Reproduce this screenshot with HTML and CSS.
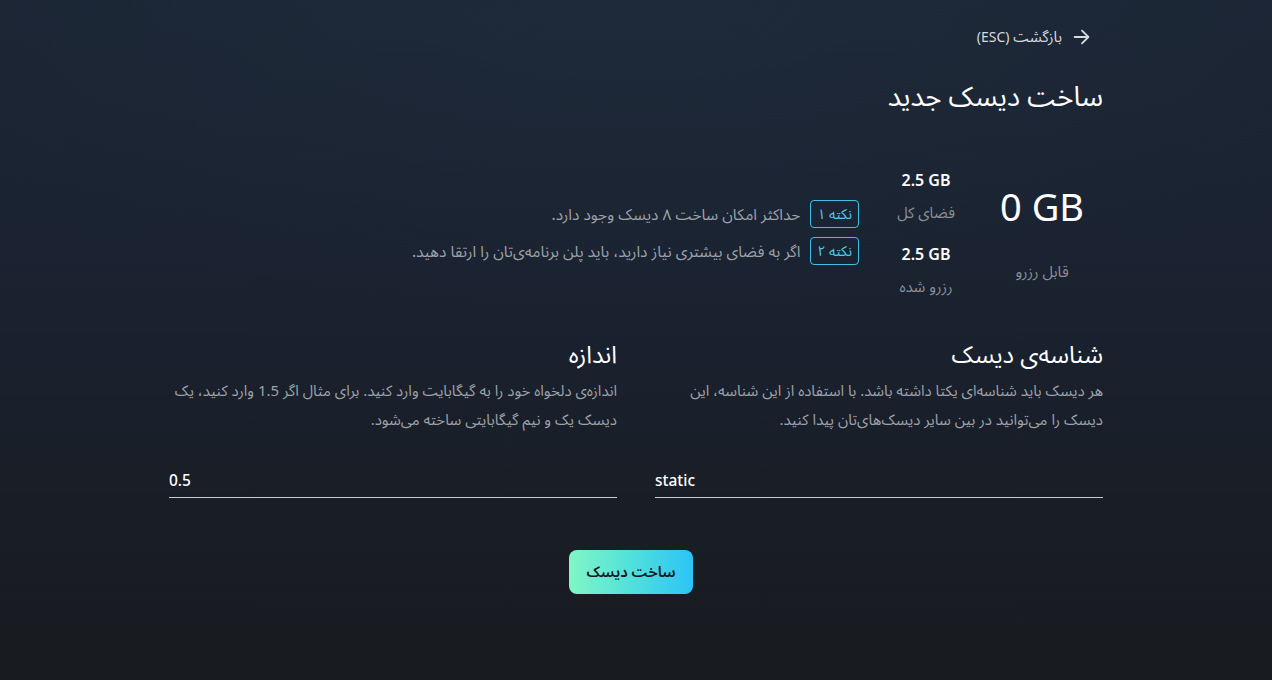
FILE: index.html
```html
<!DOCTYPE html>
<html lang="fa" dir="rtl">
<head>
<meta charset="utf-8">
<title>ساخت دیسک جدید</title>
<link rel="stylesheet" href="styles.css">
</head>
<body>
<main class="page">
  <div class="back-row">
    <a class="back" href="#">
      <svg class="back-icon" viewBox="0 0 24 24" width="22" height="22" aria-hidden="true">
        <path d="M4 12h15M12 5l7 7-7 7" fill="none" stroke="currentColor" stroke-width="2" stroke-linecap="round" stroke-linejoin="round"/>
      </svg>
      <span>بازگشت <span class="esc">(ESC)</span></span>
    </a>
  </div>

  <h1 class="title">ساخت دیسک جدید</h1>

  <section class="stats">
    <div class="stat-main">
      <div class="stat-big" dir="ltr">0 GB</div>
      <div class="stat-label">قابل رزرو</div>
    </div>
    <div class="stat-col">
      <div class="stat-item">
        <div class="stat-value" dir="ltr">2.5 GB</div>
        <div class="stat-label">فضای کل</div>
      </div>
      <div class="stat-item">
        <div class="stat-value" dir="ltr">2.5 GB</div>
        <div class="stat-label">رزرو شده</div>
      </div>
    </div>
    <div class="notes">
      <div class="note">
        <span class="badge">نکته ۱</span>
        <span class="note-text">حداکثر امکان ساخت ۸ دیسک وجود دارد.</span>
      </div>
      <div class="note">
        <span class="badge">نکته ۲</span>
        <span class="note-text">اگر به فضای بیشتری نیاز دارید، باید پلن برنامه‌ی‌تان را ارتقا دهید.</span>
      </div>
    </div>
  </section>

  <section class="form">
    <div class="field">
      <h2 class="field-title">شناسه‌ی دیسک</h2>
      <p class="field-desc">هر دیسک باید شناسه‌ای یکتا داشته باشد. با استفاده از این شناسه، این دیسک را می‌توانید در بین سایر دیسک‌های‌تان پیدا کنید.</p>
      <input class="field-input" type="text" value="static" dir="ltr">
    </div>
    <div class="field">
      <h2 class="field-title">اندازه</h2>
      <p class="field-desc">اندازه‌ی دلخواه خود را به گیگابایت وارد کنید. برای مثال اگر 1.5 وارد کنید، یک دیسک یک و نیم گیگابایتی ساخته می‌شود.</p>
      <input class="field-input" type="text" value="0.5" dir="ltr">
    </div>
  </section>

  <div class="actions">
    <button class="submit" type="button">ساخت دیسک</button>
  </div>
</main>
</body>
</html>
```

FILE: styles.css
```css
* { box-sizing: border-box; }

html, body {
  margin: 0;
  padding: 0;
}

body {
  min-height: 680px;
  font-family: "Noto Sans", "Noto Sans Arabic", "DejaVu Sans", sans-serif;
  color: #ffffff;
  background:
    radial-gradient(ellipse 70% 45% at 50% 0%, rgba(32, 45, 62, 0.55), rgba(32, 45, 62, 0) 100%),
    linear-gradient(180deg, #1b2534 0%, #1a2230 45%, #191d24 80%, #181b1f 100%);
}

.page {
  width: 934px;
  margin: 0 auto;
  padding-top: 25px;
}

.back-row {
  display: flex;
  justify-content: flex-start;
  padding-right: 10px;
}

.back {
  display: flex;
  align-items: center;
  gap: 9px;
  color: #d6d9de;
  text-decoration: none;
  font-size: 15px;
  line-height: 22px;
}

.esc {
  font-size: 14px;
}

.back-icon {
  color: #d6d9de;
}

.title {
  margin: 30px 0 0;
  font-size: 27.5px;
  font-weight: 400;
  line-height: 36px;
}

.stats {
  display: flex;
  align-items: flex-start;
  margin-top: 56px;
}

.stat-main {
  width: 122px;
  display: flex;
  flex-direction: column;
  align-items: center;
  padding-top: 13px;
}

.stat-big {
  font-size: 38px;
  line-height: 46px;
  font-weight: 400;
}

.stat-main .stat-label {
  margin-top: 32px;
}

.stat-col {
  width: 80px;
  margin-right: 15px;
  display: flex;
  flex-direction: column;
  gap: 22px;
}

.stat-item {
  display: flex;
  flex-direction: column;
  align-items: center;
  gap: 12px;
}

.stat-value {
  font-size: 16px;
  font-weight: 600;
  line-height: 20px;
}

.stat-label {
  font-size: 15px;
  line-height: 20px;
  color: #8b9098;
}

.notes {
  margin-right: 27px;
  margin-top: 30px;
  display: flex;
  flex-direction: column;
  gap: 9px;
}

.note {
  display: flex;
  align-items: center;
  gap: 10px;
  height: 28px;
}

.badge {
  border: 1px solid #3fbfea;
  border-radius: 4px;
  color: #52c8f0;
  font-size: 14px;
  line-height: 26px;
  padding: 0 6px;
}

.note-text {
  font-size: 15.5px;
  line-height: 28px;
  color: #9da2a9;
}

.form {
  display: grid;
  grid-template-columns: 1fr 1fr;
  gap: 38px;
  margin-top: 43px;
}

.field {
  display: flex;
  flex-direction: column;
}

.field-title {
  margin: 0;
  font-size: 24px;
  font-weight: 400;
  line-height: 30px;
}

.field-desc {
  margin: 7px 0 0;
  font-size: 15px;
  line-height: 29px;
  color: #9da2a9;
}

.field-input {
  margin-top: 36px;
  width: 100%;
  background: transparent;
  border: none;
  border-bottom: 1px solid #c6c9ce;
  color: #ffffff;
  font-family: "Noto Sans", "DejaVu Sans", sans-serif;
  font-size: 15.5px;
  font-weight: 500;
  padding: 0 0 7px;
  line-height: 20px;
  outline: none;
  text-align: left;
}

.actions {
  display: flex;
  justify-content: center;
  margin-top: 52px;
}

.submit {
  width: 124px;
  height: 44px;
  margin-right: 10px;
  border: none;
  border-radius: 8px;
  background: linear-gradient(90deg, #80f6c6 0%, #52e0db 50%, #2cc3f6 100%);
  color: #14181f;
  font-family: "Noto Sans", "Noto Sans Arabic", "DejaVu Sans", sans-serif;
  font-size: 15px;
  font-weight: 600;
  cursor: pointer;
}
```
